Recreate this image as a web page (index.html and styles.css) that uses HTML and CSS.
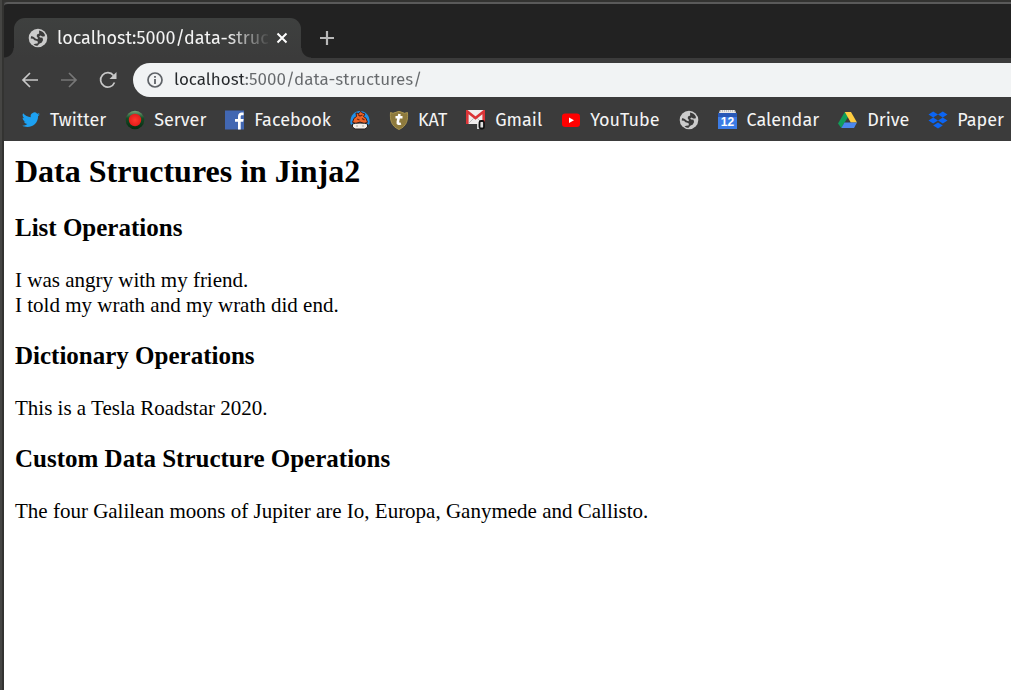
FILE: index.html
```html
<!DOCTYPE html>
<html lang="en">
<head>
<meta charset="utf-8">
<title>Data Structures in Jinja2</title>
<link rel="stylesheet" href="styles.css">
</head>
<body>
<svg class="defs" aria-hidden="true">
  <symbol id="globe" viewBox="0 0 20 20">
    <circle cx="10" cy="10" r="9.300" fill="#cbcbcb"/>
    <path fill="#3b3b3b" d="M11 2.600c2.500.2 4.800 1.700 6 4.400l-.5 1.500h-2.300l-1.500-1-1.500.8.8 1.200 2.500.3.600 2.200-1.300 2.500-2.500 1.300-1.800 2c-1.400 0-3-.6-4-1.400l1.700-.6 2.300-.3.500-1.800-1.500-1-2-.4-1.500-1.500-2.300-.2c0-1 .3-1.900.7-2.700l2.300 1 2.200 1.800 1.700.5.300-1.300-1.200-1.600.3-1.700 2.200-1.200z"/>
  </symbol>
</svg>
<div class="window">
  <header class="chrome">
    <div class="tabs">
      <div class="tab">
        <svg class="icon"><use href="#globe"/></svg>
        <span class="tab-title">localhost:5000/data-struc</span>
        <button class="tab-close" aria-label="Close tab"><svg width="12" height="12" viewBox="0 0 12 12"><path d="M1.500 1.500l9 9M10.500 1.500l-9 9" stroke="#fff" stroke-width="2"/></svg></button>
      </div>
      <button class="new-tab" aria-label="New tab"><svg width="16" height="16" viewBox="0 0 16 16"><path d="M8 1v14M1 8h14" stroke="#b8b8b8" stroke-width="2.200"/></svg></button>
    </div>
    <div class="toolbar">
      <button class="nav" aria-label="Back"><svg width="18" height="18" viewBox="0 0 18 18" fill="none" stroke="#c8c8c8" stroke-width="1.700"><path d="M17 9H2M9 2L2 9l7 7"/></svg></button>
      <button class="nav" aria-label="Forward"><svg width="18" height="18" viewBox="0 0 18 18" fill="none" stroke="#777" stroke-width="1.700"><path d="M1 9h15M9 2l7 7-7 7"/></svg></button>
      <button class="nav" aria-label="Reload"><svg width="18" height="18" viewBox="0 0 18 18"><path d="M15.500 11.500A7.200 7.200 0 1 1 14.500 4.500" fill="none" stroke="#c8c8c8" stroke-width="1.700"/><path d="M17.500 1v7h-7z" fill="#c8c8c8"/></svg></button>
      <div class="omnibox">
        <svg width="16" height="16" viewBox="0 0 16 16"><circle cx="8" cy="8" r="7" fill="none" stroke="#5f6368" stroke-width="1.700"/><path d="M8 7v5M8 4v1.800" stroke="#5f6368" stroke-width="1.800"/></svg>
        <input class="address" type="text" aria-label="Address" value="localhost:5000/data-structures/">
      </div>
    </div>
    <nav class="bookmarks" aria-label="Bookmarks">
      <a href="#"><svg class="icon" viewBox="0 0 20 20"><path fill="#1da1f2" d="M19 4.200c-.6.300-1.300.5-2 .6.700-.5 1.200-1.100 1.500-1.900-.7.400-1.500.7-2.300.9a3.700 3.700 0 0 0-6.400 3.400C6.700 7 4 5.600 2.100 3.300c-1 1.700-.4 3.800 1.200 4.900-.6 0-1.200-.2-1.700-.5 0 1.800 1.200 3.300 3 3.700-.5.200-1.100.2-1.700.1.500 1.400 1.800 2.500 3.500 2.500A7.500 7.500 0 0 1 1 15.600c5.600 3.500 16.200.8 16.100-9.500.8-.5 1.400-1.200 1.900-1.900z"/></svg><span>Twitter</span></a>
      <a href="#"><svg class="icon" viewBox="0 0 20 20"><defs><linearGradient id="green" x2="0" y2="1"><stop stop-color="#79a77b"/><stop offset=".4" stop-color="#164b25"/><stop offset="1" stop-color="#052b10"/></linearGradient><radialGradient id="red"><stop stop-color="#ff382c"/><stop offset="1" stop-color="#e31d1b"/></radialGradient></defs><circle cx="10" cy="10" r="9.300" fill="url(#green)"/><circle cx="10" cy="10" r="6.200" fill="url(#red)"/></svg><span>Server</span></a>
      <a href="#"><svg class="icon" viewBox="0 0 20 20"><path fill="#4267b2" d="M0 .5h19v19H0z"/><path fill="#fff" d="M13 19.500v-7.800h-3V9h3V6.700C13 4 14.500 2.600 17 2.600h1.600v2.700H17c-1 0-1.300.5-1.300 1.500V9h2.900l-.4 2.700h-2.500v7.800z"/></svg><span>Facebook</span></a>
      <a href="#" aria-label="Pumpkin"><svg class="icon" viewBox="0 0 20 20"><path fill="#1e8fe8" d="M.500 14C-.5 6 4 1 10 1s10.500 5 9.500 13l-3 2h-13z"/><path fill="#ee6428" stroke="#4a1c10" d="M6.500 6.500L6 3l3 .5 1.500-2 2 1.500 2.500 1-1.500 2.500 2.500 1.800 1.500 4L14 13.500l-4-1.500-4 1.500-3.500-1.200 1.500-4z"/><path d="M8 4.500l2 1.500 2.500-1M7 9l2.500 1M12 8.500l2.500 1.500" fill="none" stroke="#6e260f" stroke-width="1.300"/><path fill="#f4eee9" stroke="#282222" d="M2.500 14l3-.7L10 13l4.500.3 3 .7v3l-2.500 2H5l-2.500-2z"/><path d="M6.500 16h1M12.500 16h1" stroke="#665" stroke-width="1.200"/></svg></a>
      <a href="#"><svg class="icon" viewBox="0 0 20 20"><path fill="#8e7a3d" stroke="#a8944f" d="M1.500 2.500L4 3.300l6-2 5.500 2 3-.8c.5 7.500-.5 13.500-8.500 17C2 16 1 10 1.500 2.500z"/><path fill="none" stroke="#fff" stroke-width="2.600" d="M10.500 4L8.800 12c-.4 2 1.200 2.200 3 1.300M6.500 7.200h7"/></svg><span>KAT</span></a>
      <a href="#"><svg class="icon" viewBox="0 0 20 20"><path fill="#f1eeee" d="M0 0h19v14H0z"/><path fill="none" stroke="#db3437" stroke-width="2.600" d="M1.300 14V1.500L9.500 8l8.200-6.500V14"/><path d="M3 13l5-5M16 13l-5-5" stroke="#bdbdbd"/><path fill="#d3d3d3" d="M11 14h4v5h-4z"/><rect x="13.500" y="11" width="4.500" height="7.500" rx="1.500" fill="#ddd" stroke="#111" stroke-width="1.800"/></svg><span>Gmail</span></a>
      <a href="#"><svg class="icon" viewBox="0 0 20 20"><rect x="1" y="3.500" width="18" height="13.500" rx="3.200" fill="#f00"/><path fill="#fff" d="M8 7.500l5 2.800-5 2.800z"/></svg><span>YouTube</span></a>
      <a href="#" aria-label="Website"><svg class="icon"><use href="#globe"/></svg></a>
      <a href="#"><svg class="icon" viewBox="0 0 20 20"><path fill="#3c7ce5" d="M0 3h19v16H0z"/><path fill="#2858b7" d="M0 3h19v4H0z"/><path fill="#e8e8e8" d="M2 0h15l1 3H1z"/><path d="M2 1h15" stroke="#999" stroke-dasharray="1 1"/><text class="day" x="9.500" y="16" text-anchor="middle">12</text></svg><span>Calendar</span></a>
      <a href="#"><svg class="icon" viewBox="0 0 20 20"><path fill="#109d59" d="M6.800 2L0 13.500 3.300 18l7-11.500z"/><path fill="#ffcd40" d="M6.800 2h6.200l6 10.500h-6.200z"/><path fill="#4b87ee" d="M6.500 12.500H19L16 18H3.300z"/></svg><span>Drive</span></a>
      <a href="#"><svg class="icon" viewBox="0 0 20 20"><path fill="#0c65f3" d="M5.200 1.500l4.800 3-4.800 3-4.700-3zM14.800 1.500l4.700 3-4.700 3-4.800-3zM5.200 7.500l4.800 3-4.800 3-4.700-3zM14.800 7.500l4.700 3-4.700 3-4.800-3zM10 12.500l4.800 3-4.800 3-4.800-3z"/></svg><span>Paper</span></a>
    </nav>
  </header>
  <main class="page">
    <h1>Data Structures in Jinja2</h1>
    <h2>List Operations</h2>
    <p>I was angry with my friend.<br>I told my wrath and my wrath did end.</p>
    <h2>Dictionary Operations</h2>
    <p>This is a Tesla Roadstar 2020.</p>
    <h2>Custom Data Structure Operations</h2>
    <p>The four Galilean moons of Jupiter are Io, Europa, Ganymede and Callisto.</p>
  </main>
</div>
</body>
</html>
```
FILE: styles.css
```css
* { box-sizing: border-box; }
body { margin: 0; background: #303030; }
button { border: 0; padding: 0; background: none; display: flex; align-items: center; justify-content: center; }
svg { display: block; flex: none; }
.defs { position: absolute; width: 0; height: 0; }
.icon { width: 20px; height: 20px; }
.window {
  min-height: 100vh;
  display: flex;
  flex-direction: column;
  overflow: hidden;
  padding: 2px 0 0 4px;
  background: linear-gradient(90deg, #454543 2px, #333331 2px);
}
.chrome {
  background: #3b3b3b;
  color: #f4f4f4;
  font-family: "Fira Sans", "Noto Sans", sans-serif;
}
.tabs {
  display: flex;
  height: 56px;
  border-top: 2px solid #5a5a5a;
  border-top-left-radius: 4px;
  background: #222;
}
.tab {
  position: relative;
  display: flex;
  align-items: center;
  width: 287px;
  margin: 14px 0 0 10px;
  padding: 0 13px 0 14px;
  border-radius: 11px 11px 0 0;
  background: linear-gradient(#3e403f, #3b3b3b);
}
.tab::before, .tab::after {
  content: "";
  position: absolute;
  bottom: 0;
  width: 10px;
  height: 10px;
}
.tab::before { left: -10px; background: radial-gradient(circle at 0 0, transparent 9px, #3b3b3b 10px); }
.tab::after { right: -10px; background: radial-gradient(circle at 100% 0, transparent 9px, #3b3b3b 10px); }
.tab-title {
  margin-left: 9px;
  white-space: nowrap;
  font-size: 18px;
  line-height: 24px;
  mask-image: linear-gradient(90deg, #000 170px, transparent 214px);
}
.tab-close { margin-left: auto; width: 12px; height: 20px; }
.new-tab { width: 28px; margin: 14px 0 0 12px; }
.toolbar {
  display: flex;
  align-items: center;
  padding: 5px 0 0 6px;
}
.nav { width: 39px; height: 34px; }
.omnibox {
  flex: 1;
  display: flex;
  align-items: center;
  gap: 11px;
  height: 34px;
  margin-left: 6px;
  padding-left: 14px;
  border-radius: 17px 0 0 17px;
  background: #f1f3f4;
}
.address {
  flex: 1;
  min-width: 0;
  height: 34px;
  padding: 0;
  border: 0;
  outline: 0;
  font: 17px/34px "Fira Sans", "Noto Sans", sans-serif;
  color: transparent;
  background: linear-gradient(90deg, #24272a 69px, #66696c 69px);
  background-clip: text;
}
.bookmarks {
  display: flex;
  align-items: center;
  gap: 19px;
  height: 44px;
  padding: 2px 0 0 17px;
  white-space: nowrap;
  font-size: 18px;
  line-height: 24px;
}
.bookmarks a { display: flex; align-items: center; gap: 9px; flex: none; color: inherit; text-decoration: none; }
.day { fill: #fff; font: bold 12px "Liberation Sans", sans-serif; }
.page {
  flex: 1;
  padding: 11px;
  background: #fff;
  color: #000;
  font: 21px/25px "Liberation Serif", "Times New Roman", serif;
}
.page h1 { margin: 0; font-size: 32px; line-height: 38px; }
.page h2 { margin: 24px 0 26px; font-size: 25px; line-height: 28px; }
.page p { margin: 0; }
```
